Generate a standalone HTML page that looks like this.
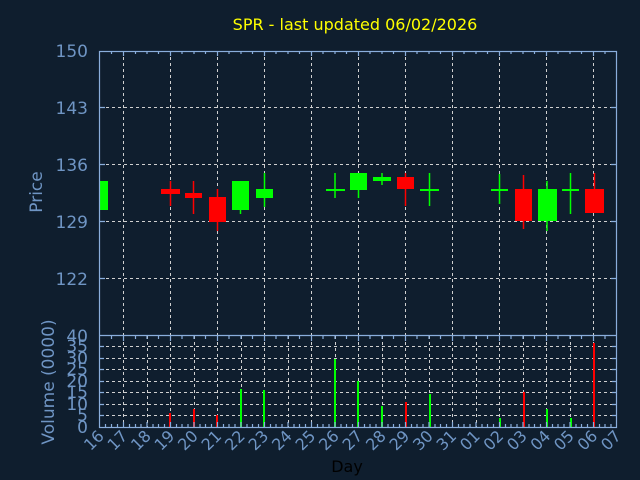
<!DOCTYPE html>
<html><head><style>
html,body{margin:0;padding:0;background:#0f1e2e;}
svg{display:block;}
text{font-family:"DejaVu Sans","Liberation Sans",sans-serif;}
</style></head><body>
<svg width="640" height="480" viewBox="0 0 640 480" xmlns="http://www.w3.org/2000/svg">
<rect width="640" height="480" fill="#0f1e2e"/>
<text x="355" y="30" fill="#ffff00" font-size="16" text-anchor="middle">SPR - last updated 06/02/2026</text>
<g stroke="#d0d0d0" stroke-width="1" stroke-dasharray="3,3">
<line x1="100" y1="107.5" x2="617" y2="107.5"/>
<line x1="100" y1="164.5" x2="617" y2="164.5"/>
<line x1="100" y1="221.5" x2="617" y2="221.5"/>
<line x1="100" y1="278.5" x2="617" y2="278.5"/>
<line x1="123.5" y1="51" x2="123.5" y2="335"/><line x1="170.5" y1="51" x2="170.5" y2="335"/>
<line x1="217.5" y1="51" x2="217.5" y2="335"/><line x1="264.5" y1="51" x2="264.5" y2="335"/>
<line x1="311.5" y1="51" x2="311.5" y2="335"/><line x1="358.5" y1="51" x2="358.5" y2="335"/>
<line x1="405.5" y1="51" x2="405.5" y2="335"/><line x1="452.5" y1="51" x2="452.5" y2="335"/>
<line x1="499.5" y1="51" x2="499.5" y2="335"/><line x1="546.5" y1="51" x2="546.5" y2="335"/>
<line x1="593.5" y1="51" x2="593.5" y2="335"/>
<line x1="100" y1="346.5" x2="617" y2="346.5"/><line x1="100" y1="358.5" x2="617" y2="358.5"/>
<line x1="100" y1="369.5" x2="617" y2="369.5"/><line x1="100" y1="381.5" x2="617" y2="381.5"/>
<line x1="100" y1="392.5" x2="617" y2="392.5"/><line x1="100" y1="404.5" x2="617" y2="404.5"/>
<line x1="100" y1="415.5" x2="617" y2="415.5"/>
<line x1="123.5" y1="336" x2="123.5" y2="427"/><line x1="147.5" y1="336" x2="147.5" y2="427"/>
<line x1="170.5" y1="336" x2="170.5" y2="427"/><line x1="194.5" y1="336" x2="194.5" y2="427"/>
<line x1="217.5" y1="336" x2="217.5" y2="427"/><line x1="241.5" y1="336" x2="241.5" y2="427"/>
<line x1="264.5" y1="336" x2="264.5" y2="427"/><line x1="288.5" y1="336" x2="288.5" y2="427"/>
<line x1="311.5" y1="336" x2="311.5" y2="427"/><line x1="335.5" y1="336" x2="335.5" y2="427"/>
<line x1="358.5" y1="336" x2="358.5" y2="427"/><line x1="382.5" y1="336" x2="382.5" y2="427"/>
<line x1="405.5" y1="336" x2="405.5" y2="427"/><line x1="429.5" y1="336" x2="429.5" y2="427"/>
<line x1="452.5" y1="336" x2="452.5" y2="427"/><line x1="476.5" y1="336" x2="476.5" y2="427"/>
<line x1="499.5" y1="336" x2="499.5" y2="427"/><line x1="523.5" y1="336" x2="523.5" y2="427"/>
<line x1="546.5" y1="336" x2="546.5" y2="427"/><line x1="570.5" y1="336" x2="570.5" y2="427"/>
<line x1="593.5" y1="336" x2="593.5" y2="427"/>
</g>
<g>
<rect x="99" y="181" width="9" height="29" fill="#00ff00"/>
<line x1="170.5" y1="181" x2="170.5" y2="206" stroke="#ff0000" stroke-width="1.5"/><rect x="161" y="189" width="19" height="5" fill="#ff0000"/>
<line x1="193.5" y1="181" x2="193.5" y2="214" stroke="#ff0000" stroke-width="1.5"/><rect x="185" y="193" width="17" height="5" fill="#ff0000"/>
<line x1="217.5" y1="189" x2="217.5" y2="231" stroke="#ff0000" stroke-width="1.5"/><rect x="209" y="197" width="17" height="25" fill="#ff0000"/>
<line x1="240.5" y1="181" x2="240.5" y2="214" stroke="#00ff00" stroke-width="1.5"/><rect x="232" y="181" width="17" height="29" fill="#00ff00"/>
<line x1="264.5" y1="173" x2="264.5" y2="207" stroke="#00ff00" stroke-width="1.5"/><rect x="256" y="189" width="17" height="9" fill="#00ff00"/>
<line x1="335" y1="173" x2="335" y2="198" stroke="#00ff00" stroke-width="1.5"/><rect x="326" y="189" width="19" height="2" fill="#00ff00"/>
<line x1="358.5" y1="173" x2="358.5" y2="198" stroke="#00ff00" stroke-width="1.5"/><rect x="350" y="173" width="17" height="17" fill="#00ff00"/>
<line x1="382" y1="173" x2="382" y2="185" stroke="#00ff00" stroke-width="1.5"/><rect x="373" y="177" width="18" height="4" fill="#00ff00"/>
<line x1="405.5" y1="173" x2="405.5" y2="206" stroke="#ff0000" stroke-width="1.5"/><rect x="397" y="177" width="17" height="12" fill="#ff0000"/>
<line x1="429.5" y1="173" x2="429.5" y2="206" stroke="#00ff00" stroke-width="1.5"/><rect x="420" y="189" width="19" height="2" fill="#00ff00"/>
<line x1="499.5" y1="174" x2="499.5" y2="204" stroke="#00ff00" stroke-width="1.5"/><rect x="491" y="189" width="17" height="2" fill="#00ff00"/>
<line x1="523.5" y1="175" x2="523.5" y2="229" stroke="#ff0000" stroke-width="1.5"/><rect x="515" y="189" width="17" height="32" fill="#ff0000"/>
<line x1="547" y1="181" x2="547" y2="231" stroke="#00ff00" stroke-width="1.5"/><rect x="538" y="189" width="19" height="32" fill="#00ff00"/>
<line x1="570.5" y1="173" x2="570.5" y2="214" stroke="#00ff00" stroke-width="1.5"/><rect x="562" y="189" width="17" height="2" fill="#00ff00"/>
<line x1="594.5" y1="173" x2="594.5" y2="189" stroke="#ff0000" stroke-width="1.5"/><rect x="585" y="189" width="19" height="24" fill="#ff0000"/>
</g>
<g>
<rect x="169" y="413" width="2" height="14" fill="#ff0000"/>
<rect x="193" y="409" width="2" height="18" fill="#ff0000"/>
<rect x="216" y="415" width="2" height="12" fill="#ff0000"/>
<rect x="240" y="389" width="2" height="38" fill="#00ff00"/>
<rect x="263" y="390" width="2" height="37" fill="#00ff00"/>
<rect x="334" y="359" width="2" height="68" fill="#00ff00"/>
<rect x="357" y="381" width="2" height="46" fill="#00ff00"/>
<rect x="381" y="406" width="2" height="21" fill="#00ff00"/>
<rect x="405" y="402" width="2" height="25" fill="#ff0000"/>
<rect x="429" y="394" width="2" height="33" fill="#00ff00"/>
<rect x="499" y="418" width="2" height="9" fill="#00ff00"/>
<rect x="523" y="392" width="2" height="35" fill="#ff0000"/>
<rect x="546" y="409" width="2" height="18" fill="#00ff00"/>
<rect x="570" y="418" width="2" height="9" fill="#00ff00"/>
<rect x="593" y="343" width="2" height="84" fill="#ff0000"/>
</g>
<g stroke="#8aaedc" stroke-width="1.2" fill="none">
<rect x="99.5" y="51.5" width="517" height="376"/>
<line x1="99.5" y1="335.5" x2="616.5" y2="335.5"/>
<path d="M99 107.5h6M99 164.5h6M99 221.5h6M99 278.5h6M611 107.5h6M611 164.5h6M611 221.5h6M611 278.5h6M99 346.5h5M99 358.5h5M99 369.5h5M99 381.5h5M99 392.5h5M99 404.5h5M99 415.5h5M612 346.5h5M612 358.5h5M612 369.5h5M612 381.5h5M612 392.5h5M612 404.5h5M612 415.5h5"/>
<path d="M111.5 51v3M123.5 51v5M135.5 51v3M147 51v3M158.5 51v3M170.5 51v5M182 51v3M194 51v3M205.5 51v3M217.5 51v5M229 51v3M241 51v3M252.5 51v3M264.5 51v5M276 51v3M288 51v3M299.5 51v3M311.5 51v5M323 51v3M335 51v3M346.5 51v3M358.5 51v5M370 51v3M382 51v3M393.5 51v3M405.5 51v5M417 51v3M429 51v3M440.5 51v3M452.5 51v5M464 51v3M476 51v3M487.5 51v3M499.5 51v5M511 51v3M523 51v3M534.5 51v3M546.5 51v5M558 51v3M570 51v3M581.5 51v3M593.5 51v5M605 51v3"/>
<path d="M111.5 336v3M123.5 336v5M135.5 336v3M147 336v3M158.5 336v3M170.5 336v5M182 336v3M194 336v3M205.5 336v3M217.5 336v5M229 336v3M241 336v3M252.5 336v3M264.5 336v5M276 336v3M288 336v3M299.5 336v3M311.5 336v5M323 336v3M335 336v3M346.5 336v3M358.5 336v5M370 336v3M382 336v3M393.5 336v3M405.5 336v5M417 336v3M429 336v3M440.5 336v3M452.5 336v5M464 336v3M476 336v3M487.5 336v3M499.5 336v5M511 336v3M523 336v3M534.5 336v3M546.5 336v5M558 336v3M570 336v3M581.5 336v3M593.5 336v5M605 336v3"/>
<path d="M105.5 427v-3M111.5 427v-3M117.5 427v-3M123.5 427v-5M129.5 427v-3M135.5 427v-3M141 427v-3M147 427v-5M153 427v-3M158.5 427v-3M164.5 427v-3M170.5 427v-5M176.5 427v-3M182 427v-3M188 427v-3M194 427v-5M200 427v-3M205.5 427v-3M211.5 427v-3M217.5 427v-5M223.5 427v-3M229 427v-3M235 427v-3M241 427v-5M247 427v-3M252.5 427v-3M258.5 427v-3M264.5 427v-5M270.5 427v-3M276 427v-3M282 427v-3M288 427v-5M294 427v-3M299.5 427v-3M305.5 427v-3M311.5 427v-5M317.5 427v-3M323 427v-3M329 427v-3M335 427v-5M341 427v-3M346.5 427v-3M352.5 427v-3M358.5 427v-5M364.5 427v-3M370 427v-3M376 427v-3M382 427v-5M388 427v-3M393.5 427v-3M399.5 427v-3M405.5 427v-5M411.5 427v-3M417 427v-3M423 427v-3M429 427v-5M435 427v-3M440.5 427v-3M446.5 427v-3M452.5 427v-5M458.5 427v-3M464 427v-3M470 427v-3M476 427v-5M482 427v-3M487.5 427v-3M493.5 427v-3M499.5 427v-5M505.5 427v-3M511 427v-3M517 427v-3M523 427v-5M529 427v-3M534.5 427v-3M540.5 427v-3M546.5 427v-5M552.5 427v-3M558 427v-3M564 427v-3M570 427v-5M576 427v-3M581.5 427v-3M587.5 427v-3M593.5 427v-5M599.5 427v-3M605 427v-3M611 427v-3"/>
</g>
<g fill="#6f95c4" font-size="17" text-anchor="end">
<text x="88" y="57">150</text><text x="88" y="114">143</text><text x="88" y="171">136</text>
<text x="88" y="228">129</text><text x="88" y="285">122</text><text x="88" y="342">40</text>
<text x="88" y="352">35</text><text x="88" y="364">30</text><text x="88" y="375">25</text>
<text x="88" y="387">20</text><text x="88" y="398">15</text><text x="88" y="410">10</text>
<text x="88" y="421">5</text><text x="88" y="433">0</text>
</g>
<g fill="#6f95c4" font-size="17" text-anchor="middle">
<text transform="translate(42,192) rotate(-90)">Price</text>
<text transform="translate(54,382) rotate(-90)">Volume (0000)</text>
</g>
<g fill="#6f95c4" font-size="16" text-anchor="end">
<text transform="translate(105,437) rotate(-45)">16</text>
<text transform="translate(128.5,437) rotate(-45)">17</text>
<text transform="translate(152,437) rotate(-45)">18</text>
<text transform="translate(175.5,437) rotate(-45)">19</text>
<text transform="translate(199,437) rotate(-45)">20</text>
<text transform="translate(222.5,437) rotate(-45)">21</text>
<text transform="translate(246,437) rotate(-45)">22</text>
<text transform="translate(269.5,437) rotate(-45)">23</text>
<text transform="translate(293,437) rotate(-45)">24</text>
<text transform="translate(316.5,437) rotate(-45)">25</text>
<text transform="translate(340,437) rotate(-45)">26</text>
<text transform="translate(363.5,437) rotate(-45)">27</text>
<text transform="translate(387,437) rotate(-45)">28</text>
<text transform="translate(410.5,437) rotate(-45)">29</text>
<text transform="translate(434,437) rotate(-45)">30</text>
<text transform="translate(457.5,437) rotate(-45)">31</text>
<text transform="translate(481,437) rotate(-45)">01</text>
<text transform="translate(504.5,437) rotate(-45)">02</text>
<text transform="translate(528,437) rotate(-45)">03</text>
<text transform="translate(551.5,437) rotate(-45)">04</text>
<text transform="translate(575,437) rotate(-45)">05</text>
<text transform="translate(598.5,437) rotate(-45)">06</text>
<text transform="translate(622,437) rotate(-45)">07</text>
</g>
<text x="347" y="472" fill="#000000" font-size="16" text-anchor="middle">Day</text>
</svg>
</body></html>
